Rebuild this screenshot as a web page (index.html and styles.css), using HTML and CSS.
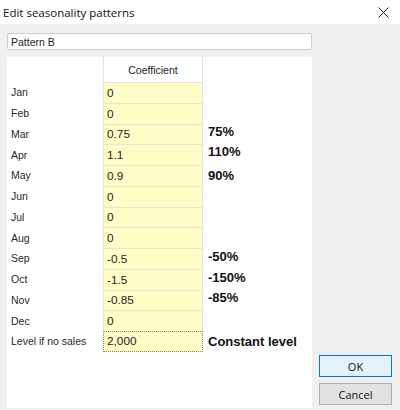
FILE: index.html
```html
<!DOCTYPE html>
<html lang="en">
<head>
  <meta charset="UTF-8" />
  <title>Edit seasonality patterns</title>
  <link rel="stylesheet" href="styles.css">
</head>
<body>

  <div class="titlebar">
    <span class="title">Edit seasonality patterns</span>
    <svg class="close" width="11" height="11" viewBox="0 0 11 11">
      <path d="M0.5 0.5 L10.5 10.5 M10.5 0.5 L0.5 10.5" stroke="#222" stroke-width="1" fill="none" />
    </svg>
  </div>

  <div class="dialog">
    <div class="main">
      <input class="name" type="text" value="Pattern B" />

      <div class="grid">
        <div class="head"></div>
        <div class="head coef-head">Coefficient</div>
        <div class="head"></div>

        <div class="label">Jan</div><div class="cell">0</div><div class="note"></div>
        <div class="label">Feb</div><div class="cell">0</div><div class="note"></div>
        <div class="label">Mar</div><div class="cell">0.75</div><div class="note">75%</div>
        <div class="label">Apr</div><div class="cell">1.1</div><div class="note up">110%</div>
        <div class="label">May</div><div class="cell">0.9</div><div class="note down">90%</div>
        <div class="label">Jun</div><div class="cell">0</div><div class="note"></div>
        <div class="label">Jul</div><div class="cell">0</div><div class="note"></div>
        <div class="label">Aug</div><div class="cell">0</div><div class="note"></div>
        <div class="label">Sep</div><div class="cell">-0.5</div><div class="note">-50%</div>
        <div class="label">Oct</div><div class="cell">-1.5</div><div class="note">-150%</div>
        <div class="label">Nov</div><div class="cell">-0.85</div><div class="note">-85%</div>
        <div class="label">Dec</div><div class="cell">0</div><div class="note"></div>
        <div class="label">Level if no sales</div><div class="cell focus">2,000</div><div class="note big">Constant level</div>
      </div>
    </div>

    <div class="side">
      <button class="btn primary">OK</button>
      <button class="btn">Cancel</button>
    </div>
  </div>

</body>
</html>
```

FILE: styles.css
```css
body {
  margin: 0;
  width: 400px;
  height: 410px;
  background: #f0f0f0;
  font-family: 'Liberation Sans', Arial, sans-serif;
  color: #1e1e1e;
  overflow: hidden;
}

.titlebar {
  height: 24px;
  background: #fff;
  display: flex;
  align-items: center;
  justify-content: space-between;
  padding: 0 11px 0 3px;
}

.title {
  font-family: 'Open Sans', 'Noto Sans', sans-serif;
  font-size: 11.5px;
  color: #111;
}

.dialog {
  display: flex;
  padding: 9px 8px 0 7px;
  gap: 7px;
}

.main {
  width: 305px;
  display: flex;
  flex-direction: column;
  gap: 7px;
}

.name {
  box-sizing: border-box;
  width: 305px;
  height: 17px;
  margin: 0;
  padding: 0 3px;
  border: 1px solid #cfcfcf;
  border-radius: 2px;
  background: #fff;
  font-family: 'Liberation Sans', Arial, sans-serif;
  font-size: 10.5px;
  color: #1e1e1e;
  outline: none;
}

.grid {
  height: 351px;
  background: #fff;
  display: grid;
  grid-template-columns: 96px 100px 1fr;
  grid-template-rows: 25px;
  grid-auto-rows: 20.75px;
  align-content: start;
}

.head {
  font-size: 10.5px;
  display: flex;
  align-items: center;
  justify-content: center;
}

.coef-head {
  border-left: 1px solid #e3e3e3;
  border-right: 1px solid #e3e3e3;
  padding-top: 1px;
}

.label {
  font-size: 10.5px;
  padding-left: 4px;
  display: flex;
  align-items: center;
  color: #2a1f2a;
}

.cell {
  box-sizing: border-box;
  background: #fffdc6;
  border-top: 1px solid #e6e5d6;
  border-left: 1px solid #e3e3e3;
  border-right: 1px solid #e3e3e3;
  padding-left: 3px;
  font-size: 11.8px;
  display: flex;
  align-items: center;
}

.cell.focus {
  border: 1px dotted #8a8a70;
}

.note {
  font-weight: bold;
  font-size: 13px;
  padding-left: 5px;
  display: flex;
  align-items: center;
  color: #111;
  position: relative;
  top: -2px;
}

.note.up {
  top: -3px;
}

.note.down {
  top: 0;
}

.note.big {
  top: 0;
  font-size: 13px;
}

.side {
  width: 73px;
  display: flex;
  flex-direction: column;
  justify-content: flex-end;
  gap: 6px;
  padding-bottom: 3px;
}

.btn {
  box-sizing: border-box;
  width: 73px;
  height: 22px;
  margin: 0;
  padding: 0;
  border: 1px solid #adadad;
  background: #e1e1e1;
  font-family: 'Open Sans', 'Noto Sans', sans-serif;
  font-size: 11px;
  color: #111;
}

.btn.primary {
  border-color: #0078d7;
  background: #e5f1fb;
}
```
